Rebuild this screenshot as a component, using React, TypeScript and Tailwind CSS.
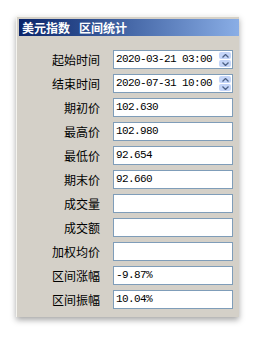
import React from "react";

type Row = { label: string; value: string; spin?: boolean };

const rows: Row[] = [
  { label: "起始时间", value: "2020-03-21 03:00", spin: true },
  { label: "结束时间", value: "2020-07-31 10:00", spin: true },
  { label: "期初价", value: "102.630" },
  { label: "最高价", value: "102.980" },
  { label: "最低价", value: "92.654" },
  { label: "期末价", value: "92.660" },
  { label: "成交量", value: "" },
  { label: "成交额", value: "" },
  { label: "加权均价", value: "" },
  { label: "区间涨幅", value: "-9.87%" },
  { label: "区间振幅", value: "10.04%" },
];

function Chevron({ up }: { up?: boolean }) {
  return (
    <svg width="7" height="4" viewBox="0 0 7 4" className="block">
      <path
        d={up ? "M0.5 3.5 L3.5 0.5 L6.5 3.5" : "M0.5 0.5 L3.5 3.5 L6.5 0.5"}
        fill="none"
        stroke="#4d6185"
        strokeWidth="1.3"
      />
    </svg>
  );
}

function Spinner() {
  return (
    <div className="flex w-[13px] flex-col gap-px py-px pr-px">
      <div className="flex flex-1 items-center justify-center rounded-[2px] bg-[#c4d5f8]">
        <Chevron up />
      </div>
      <div className="flex flex-1 items-center justify-center rounded-[2px] bg-[#c4d5f8]">
        <Chevron />
      </div>
    </div>
  );
}

export default function App() {
  return (
    <div className="h-[339px] w-[253px] bg-white pl-4 pt-4">
      <section className="flex h-[301px] w-[223px] flex-col border-l border-t border-[#f4f3ee] bg-[#d4d0c8] pl-[2px] pt-[2px] shadow-[0_3px_6px_rgba(0,0,0,0.35)]">
        <h2 className="flex h-[17px] items-center bg-gradient-to-r from-[#0a246a] to-[#8aaee6] pl-[3px] font-['Noto_Sans_CJK_SC',sans-serif] text-[12px] font-bold leading-none text-white">
          <span>美元指数</span>
          <span className="ml-[9px]">区间统计</span>
        </h2>
        <div className="mt-[14px] flex flex-col gap-[5px] pr-[6px]">
          {rows.map((row) => (
            <div key={row.label} className="flex h-[19px] items-center">
              <span className="w-[81px] text-right font-['Noto_Sans_CJK_SC',sans-serif] text-[12px] leading-none text-black">
                {row.label}
              </span>
              <div className="ml-[13px] flex h-full flex-1 border border-[#7f9db9] bg-white">
                <span className="flex-1 self-center pl-[2px] font-['Liberation_Mono',monospace] text-[11px] leading-none tracking-[-0.6px] text-black">
                  {row.value}
                </span>
                {row.spin && <Spinner />}
              </div>
            </div>
          ))}
        </div>
      </section>
    </div>
  );
}
